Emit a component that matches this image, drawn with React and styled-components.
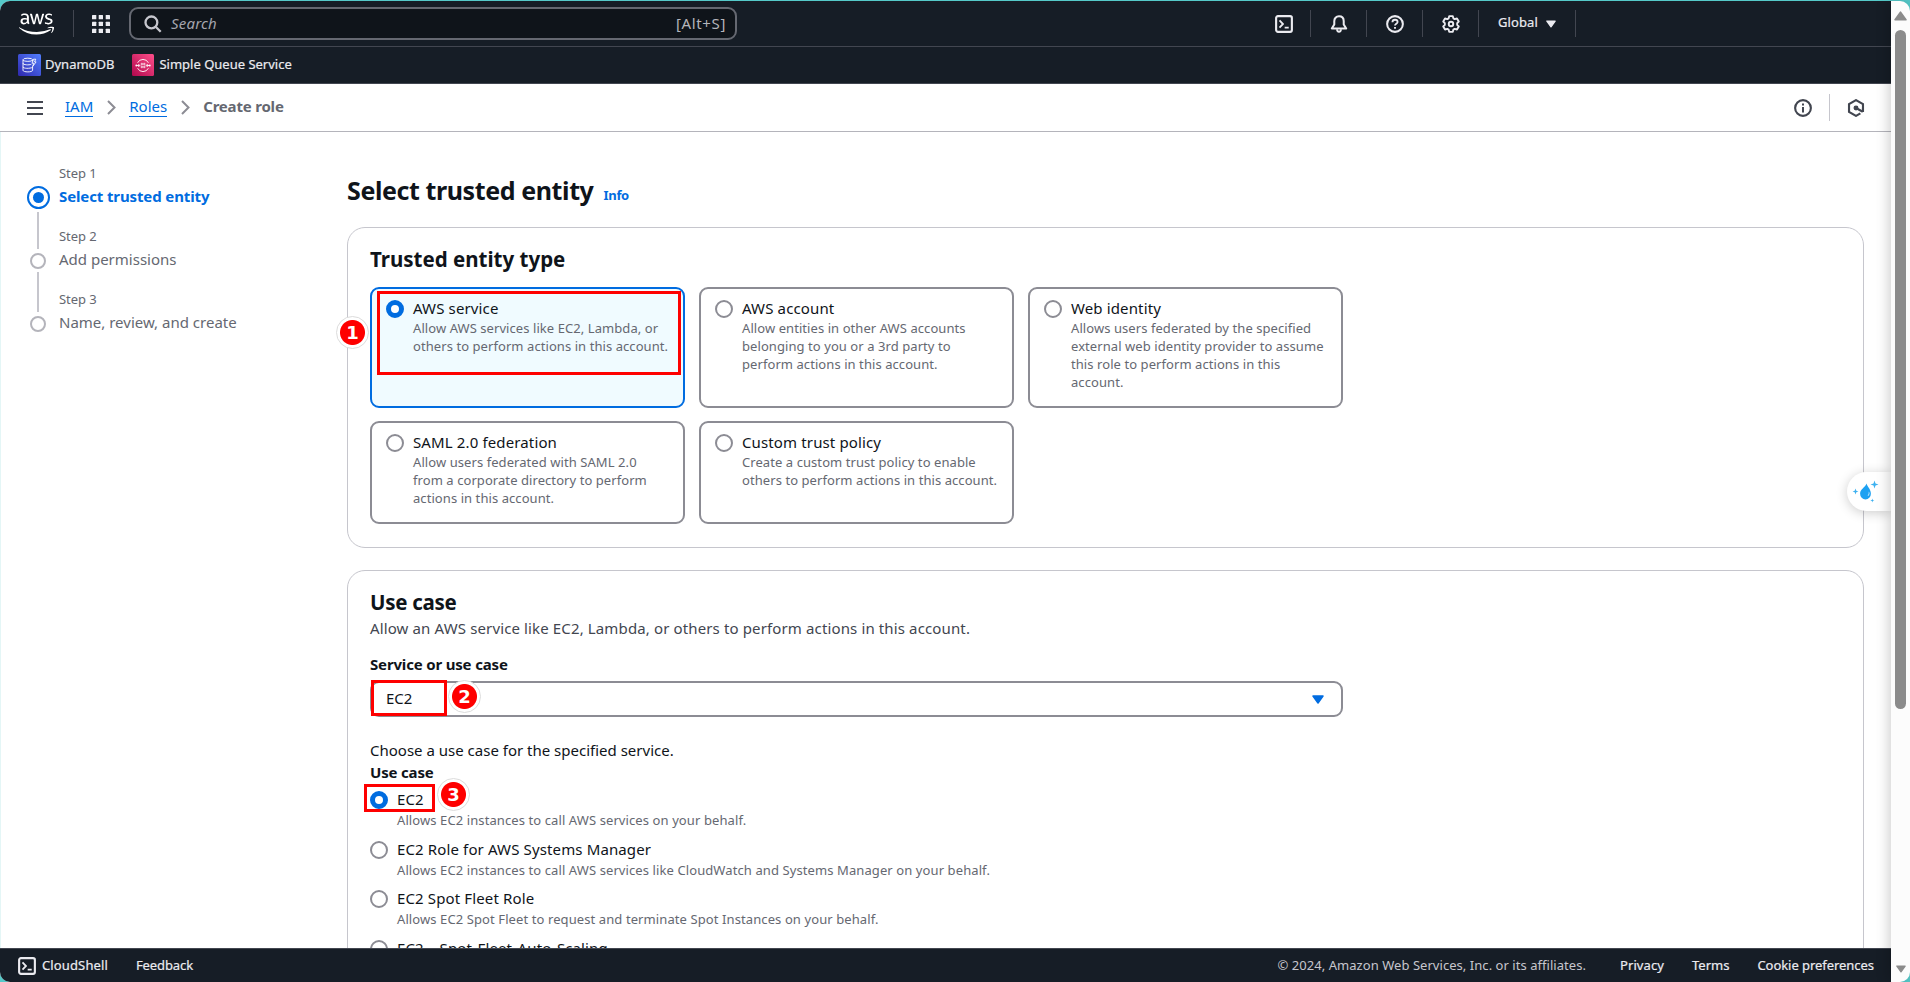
import React from 'react';
import styled, { createGlobalStyle, css } from 'styled-components';
import { FaAws } from 'react-icons/fa';

const GlobalStyle = createGlobalStyle`
  *, *::before, *::after { box-sizing: border-box; }
  body {
    margin: 0;
    overflow: hidden;
    background: #55c9c9;
    font-family: "Noto Sans", "Open Sans", sans-serif;
    font-size: 15px;
    line-height: 22px;
    color: #0f141a;
  }
  svg { display: block; flex: none; }
`;

/* ---------- window ---------- */

const Window = styled.div`
  height: 100vh;
  padding-top: 1px;
  display: flex;
`;

const Page = styled.div`
  width: 1891px;
  height: 100%;
  display: flex;
  flex-direction: column;
  background: #fff;
  border-radius: 10px 0 0 10px;
  overflow: hidden;
`;

const ScrollTrack = styled.div`
  flex: 1;
  position: relative;
  z-index: 2;
  display: flex;
  flex-direction: column;
  align-items: center;
  padding: 10px 0 8px;
  background: #fcfcfc;
  border-radius: 0 10px 10px 0;
  box-shadow: -2px 0 14px rgba(0, 0, 0, 0.2);
`;

const ScrollThumb = styled.div`
  width: 11px;
  height: 679px;
  margin: 9px 0 auto;
  border-radius: 6px;
  background: #8b8b8b;
`;

/* ---------- header ---------- */

const Header = styled.header`
  flex: none;
  height: 83px;
  background: #161d26;
  color: #ebebf0;
`;

const TopNav = styled.div`
  height: 46px;
  display: flex;
  align-items: center;
  padding-left: 19px;
  border-bottom: 1px solid #424650;
`;

const Divider = styled.span`
  flex: none;
  width: 1px;
  height: 27px;
  background: ${(p) => p.$color || '#424650'};
`;

const AwsLogo = styled(FaAws)`
  width: 35px;
  height: 28px;
  margin-right: 19px;
  color: #fff;
`;

const AppsButton = styled.span`
  display: flex;
  margin: 1px 19px 0 18px;
`;

const SearchBox = styled.div`
  width: 608px;
  height: 33px;
  display: flex;
  align-items: center;
  padding: 0 9px 0 13px;
  border: 2px solid #656871;
  border-radius: 9px;
  background: #0f141a;
  color: #a4a4ad;
`;

const SearchHint = styled.span`
  flex: 1;
  margin: -2px 0 0 9px;
  font-style: italic;
  letter-spacing: 0.2px;
`;

const Shortcut = styled.span`
  margin-top: -2px;
  letter-spacing: 0.63px;
  color: #b4b4bb;
`;

const NavTools = styled.div`
  display: flex;
  align-items: center;
  margin-left: auto;
  margin-right: 315px;
`;

const ToolButton = styled.span`
  width: 55px;
  display: flex;
  justify-content: center;
  padding-left: ${(p) => (p.$first ? 2 : 0)}px;
`;

const RegionMenu = styled.span`
  width: 96px;
  display: flex;
  align-items: center;
  padding-left: 19px;
  gap: 8px;
  font-size: 13px;
  line-height: 18px;
  letter-spacing: 0.1px;
  -webkit-text-stroke: 0.2px;
`;

const RegionName = styled.span`
  margin-top: -3px;
`;

const Favorites = styled.div`
  height: 37px;
  display: flex;
  align-items: center;
  gap: 18px;
  padding-left: 18px;
  border-bottom: 1px solid #424650;
`;

const Favorite = styled.span`
  display: flex;
  align-items: center;
  gap: ${(p) => p.$gap}px;
`;

const FavoriteName = styled.span`
  margin-top: -2px;
  font-size: 13px;
  line-height: 18px;
  -webkit-text-stroke: 0.2px;
`;

const BreadcrumbBar = styled.nav`
  flex: none;
  height: 48px;
  display: flex;
  align-items: center;
  padding: 0 26px 0 27px;
  border-bottom: 1px solid #b4b4bb;
  color: #424650;
`;

const Crumb = styled.a`
  color: #006ce0;
  line-height: 16px;
  padding-bottom: 2px;
  border-bottom: 1px solid #006ce0;
`;

const CrumbList = styled.div`
  flex: 1;
  display: flex;
  align-items: center;
  gap: 13.5px;
  margin-left: 22px;
`;

const CurrentCrumb = styled.span`
  margin-top: -3px;
  font-weight: 700;
  letter-spacing: -0.19px;
  color: #656871;
`;

const BarTools = styled.div`
  display: flex;
  align-items: center;
  gap: 17px;
`;

/* ---------- body ---------- */

const Body = styled.div`
  flex: 1;
  min-height: 0;
  overflow: hidden;
  display: flex;
  border-left: 1px solid #e4f6f6;
`;

const Steps = styled.ol`
  flex: none;
  width: 346px;
  margin: 0;
  padding: 32px 0 0 26px;
  list-style: none;
`;

const Step = styled.li`
  height: 63px;
  display: grid;
  grid-template-columns: 23px 1fr;
  column-gap: 9px;
`;

const StepRail = styled.div`
  display: grid;
  grid-template-rows: 22px 24px 1fr;
  justify-items: center;
`;

const RailLine = styled.span`
  width: 2px;
  margin: ${(p) => p.$top || 0}px 1px 0 0;
  background: ${(p) => (p.$hidden ? 'transparent' : '#c6c6cd')};
`;

const StepMarker = styled.span`
  place-self: center;
  display: grid;
  place-items: center;
  ${(p) =>
    p.$active
      ? css`
          width: 23px;
          height: 23px;
          margin-bottom: 1px;
          border: 2px solid #006ce0;
          border-radius: 50%;
          &::after {
            content: '';
            width: 11px;
            height: 11px;
            border-radius: 50%;
            background: #006ce0;
          }
        `
      : css`
          width: 16px;
          height: 16px;
          margin: 0 1px 1px 0;
          border: 2px solid #b4b4bb;
          border-radius: 50%;
        `}
`;

const StepNumber = styled.div`
  margin-bottom: 3px;
  font-size: 13px;
  line-height: 18px;
  letter-spacing: -0.08px;
  color: #656871;
`;

const StepName = styled.div`
  color: ${(p) => (p.$active ? '#006ce0' : '#656871')};
  font-weight: ${(p) => (p.$active ? 700 : 400)};
  letter-spacing: ${(p) => (p.$active ? -0.12 : 0)}px;
`;

const Main = styled.main`
  width: 1517px;
  padding-top: 43px;
`;

const TitleRow = styled.div`
  display: flex;
  align-items: baseline;
  gap: 10px;
  height: 30px;
  margin-bottom: 22px;
`;

const Title = styled.h1`
  margin: 0;
  font-size: 25px;
  line-height: 30px;
  letter-spacing: -0.4px;
`;

const InfoLink = styled.a`
  font-size: 13px;
  font-weight: 700;
  letter-spacing: -0.29px;
  color: #006ce0;
`;

const Card = styled.section`
  margin-bottom: 22px;
  padding: 18px 22px 23px;
  border: 1px solid #c6c6cd;
  border-radius: 18px;
`;

const CardTitle = styled.h2`
  margin: 0;
  font-size: 20.5px;
  line-height: 26px;
  letter-spacing: ${(p) => p.$spacing || 0}px;
`;

const Tiles = styled.div`
  display: grid;
  grid-template-columns: repeat(3, 315px);
  grid-template-rows: 121px 103px;
  gap: 13px 14px;
  margin-top: 15px;
`;

const Tile = styled.div`
  position: relative;
  display: grid;
  grid-template-columns: 18px 1fr;
  align-content: start;
  column-gap: 9px;
  padding: 8px 10px 0 14px;
  border: 2px solid ${(p) => (p.$selected ? '#006ce0' : '#8c8c94')};
  border-radius: 9px;
  background: ${(p) => (p.$selected ? '#f0fbff' : '#fff')};
`;

const Radio = styled.span`
  width: 18px;
  height: 18px;
  margin-top: 3px;
  border-radius: 50%;
  background: #fff;
  border: ${(p) => (p.$checked ? '5.5px solid #006ce0' : '2px solid #8c8c94')};
`;

const OptionLabel = styled.div`
  letter-spacing: 0.13px;
  word-spacing: ${(p) => p.$words || 0}px;
`;

const Hint = styled.div`
  grid-column: 2;
  margin-top: ${(p) => p.$top || 0}px;
  font-size: 13px;
  line-height: 18px;
  letter-spacing: ${(p) => p.$spacing || 0.07}px;
  white-space: pre-line;
  color: #656871;
`;

const CardDescription = styled.p`
  margin: 2px 0 14px;
  letter-spacing: 0.131px;
  color: #424650;
`;

const FieldLabel = styled.div`
  font-weight: 700;
  letter-spacing: -0.17px;
`;

const Select = styled.div`
  position: relative;
  width: 973px;
  height: 36px;
  margin: 6px 0 22px;
  padding: 0 17px 0 14px;
  display: flex;
  align-items: center;
  justify-content: space-between;
  border: 2px solid #8c8c94;
  border-radius: 9px;
`;

const SelectValue = styled.span`
  margin-top: -2px;
`;

const OptionRow = styled.div`
  position: relative;
  height: 49.5px;
  display: grid;
  grid-template-columns: 18px 1fr;
  align-content: start;
  column-gap: 9px;
`;

const Options = styled.div`
  padding-top: 5px;
`;

/* ---------- annotations over the content ---------- */

const Highlight = styled.span`
  position: absolute;
  left: ${(p) => p.$x}px;
  top: ${(p) => p.$y}px;
  width: ${(p) => p.$w}px;
  height: ${(p) => p.$h}px;
  border: 3px solid #fe0000;
`;

const Badge = styled.span`
  position: absolute;
  left: ${(p) => p.$x}px;
  top: ${(p) => p.$y}px;
  width: 33px;
  height: 33px;
  display: grid;
  place-items: center;
  border: 1px solid #dcdcdc;
  border-radius: 50%;
  background: radial-gradient(circle, #fe0000 12px, #fff 13px);
  color: #fff;
  font: 700 18px/31px "DejaVu Sans", sans-serif;
`;

const AssistantTab = styled.div`
  position: absolute;
  left: 1847px;
  top: 472px;
  width: 44px;
  height: 39px;
  padding: 7px 0 0 5px;
  border-radius: 20px 0 0 20px;
  background: #fff;
  box-shadow: 0 2px 12px rgba(0, 0, 0, 0.2);
`;

/* ---------- footer ---------- */

const Footer = styled.footer`
  flex: none;
  height: 34px;
  display: flex;
  align-items: center;
  padding: 0 17px 0 18px;
  border-top: 1px solid #424650;
  background: #161d26;
  color: #ebebf0;
  font-size: 13px;
  line-height: 18px;
`;

const FooterLink = styled.span`
  margin: -2px 0 0 ${(p) => p.$left}px;
  letter-spacing: ${(p) => p.$spacing || 0}px;
  -webkit-text-stroke: 0.2px;
`;

const Copyright = styled.span`
  margin: -2px 0 0 auto;
  letter-spacing: 0.046px;
  color: #c6c6cd;
`;

/* ---------- icons ---------- */

const Icon = ({ size = 18, children }) => (
  <svg width={size} height={size} viewBox="0 0 16 16" fill="none" stroke="currentColor" strokeWidth="1.9">
    {children}
  </svg>
);

const TerminalIcon = () => (
  <Icon>
    <rect x="1" y="1" width="14" height="14" rx="1.6" />
    <path d="M4 4.8 7.1 8 4 11.2M8.6 11.3h3.6" strokeWidth="1.6" />
  </Icon>
);

const BellIcon = () => (
  <Icon>
    <path d="M8 1.2c-2.6 0-4.2 1.8-4.2 4.3v2.9L1.6 12h12.8l-2.2-3.6V5.5C12.2 3 10.6 1.2 8 1.2Z" strokeLinejoin="round" strokeWidth="1.8" />
    <path d="M6.3 12.6c0 3 3.4 3 3.4 0" strokeWidth="1.7" />
  </Icon>
);

const HelpIcon = () => (
  <Icon>
    <circle cx="8" cy="8" r="7" strokeWidth="1.8" />
    <path d="M5.7 6.4c0-1.4 1-2.2 2.3-2.2s2.3.8 2.3 2c0 1.6-2.3 1.6-2.3 3.2" strokeWidth="1.6" />
    <path d="M8 10.6v1.7" strokeWidth="1.7" />
  </Icon>
);

const GearIcon = () => (
  <Icon>
    <path
      d="M6.4 1h3.2l.5 2 1.2.7 2-.6 1.6 2.7-1.400 1.400v1.600l1.400 1.400-1.600 2.700-2-.6-1.200.7-.5 2H6.400l-.5-2-1.200-.7-2 .6-1.600-2.700 1.400-1.400V7.200L1.100 5.800l1.600-2.700 2 .6L5.900 3Z"
      strokeLinejoin="round"
      strokeWidth="1.7"
    />
    <circle cx="8" cy="8" r="2" strokeWidth="1.7" />
  </Icon>
);

const InfoIcon = () => (
  <Icon>
    <circle cx="8" cy="8" r="7" strokeWidth="1.9" />
    <path d="M8 4v1.8M8 7v5" strokeWidth="1.8" />
  </Icon>
);

const HexIcon = () => (
  <Icon>
    <path d="M14.2 9.500V4.500L8 1 1.800 4.500v7L8 15l3.900-2.200" strokeWidth="1.9" />
    <path d="M14.200 8.500v3" strokeWidth="1.9" />
    <circle cx="8" cy="8" r="2.200" fill="currentColor" stroke="none" />
    <path d="m8 8 6 3.300" strokeWidth="1.900" />
  </Icon>
);

const GridIcon = () => (
  <svg width="18" height="18" viewBox="0 0 18 18" fill="currentColor">
    {[0, 7, 14].map((y) =>
      [0, 7, 14].map((x) => <rect key={`${x}-${y}`} x={x - (x ? 0.3 : 0)} y={y - (y ? 0.3 : 0)} width="4.3" height="4.3" rx="0.5" />)
    )}
  </svg>
);

const SearchIcon = () => (
  <svg width="18" height="18" viewBox="0 0 18 18" fill="none" stroke="#c6c6cd" strokeWidth="2.3">
    <circle cx="7.4" cy="7.4" r="5.9" />
    <path d="m11.7 11.7 5 5" />
  </svg>
);

const MenuIcon = () => (
  <svg width="16" height="14" viewBox="0 0 16 14" stroke="currentColor" strokeWidth="2">
    <path d="M0 1h16M0 7h16M0 13h16" />
  </svg>
);

const Chevron = () => (
  <svg width="9" height="15" viewBox="0 0 9 15" fill="none" stroke="#8c8c94" strokeWidth="2">
    <path d="m1 1 6.5 6.500L1 14" />
  </svg>
);

const Triangle = ({ w, h, color = 'currentColor', up }) => (
  <svg width={w} height={h} viewBox="0 0 12 9">
    <path d={up ? 'M1 8 6 1l5 7Z' : 'M1 1h10L6 8Z'} fill={color} stroke={color} strokeWidth="1.5" strokeLinejoin="round" />
  </svg>
);

const DynamoIcon = () => (
  <svg width="23" height="22" viewBox="0 0 23 22">
    <defs>
      <linearGradient id="dynamo" x1="0" y1="1" x2="1" y2="0">
        <stop offset="0" stopColor="#2e27ad" />
        <stop offset="1" stopColor="#527fff" />
      </linearGradient>
    </defs>
    <rect width="23" height="22" rx="1.5" fill="url(#dynamo)" />
    <g fill="none" stroke="#fff" strokeWidth="0.9">
      <ellipse cx="9.8" cy="5.8" rx="4.8" ry="1.6" />
      <path d="M5 5.800v10.500c0 2.100 9.600 2.100 9.600 0v-3.600M14.600 5.800v1.300M5 9.200c0 1.900 6 2 8.300 1.100M5 12.800c0 1.900 7 2 9.600.5" />
      <path d="m15.500 5.200-1.500 4h1.800l-1.200 3.400 3.500-4.700h-1.600l1.300-2.700Z" />
    </g>
  </svg>
);

const QueueIcon = () => (
  <svg width="22" height="22" viewBox="0 0 22 22">
    <defs>
      <linearGradient id="queue" x1="0" y1="1" x2="1" y2="0">
        <stop offset="0" stopColor="#b0084d" />
        <stop offset="1" stopColor="#ff4f8b" />
      </linearGradient>
    </defs>
    <rect width="22" height="22" rx="1.5" fill="url(#queue)" />
    <g fill="none" stroke="#fff" strokeWidth="0.9">
      <path d="M5.600 8.800a6 6 0 0 1 10.800 0M5.600 14.200a6 6 0 0 0 10.800 0" />
      <path d="M4.500 11.500h3M14.500 11.500h3M6.300 10l1.500 1.500L6.300 13M15.700 10l-1.500 1.500 1.500 1.500" />
      <path d="M9.200 9.300h1.200v1.500H9.200ZM11.700 9.300h1.200v1.500h-1.200ZM9.200 12.200h1.200v1.500H9.200ZM11.700 12.200h1.200v1.500h-1.200Z" strokeWidth="0.7" />
    </g>
    <circle cx="4.300" cy="11.500" r="0.900" fill="#fff" />
    <circle cx="17.800" cy="11.500" r="0.900" fill="#fff" />
  </svg>
);

const DropletIcon = () => (
  <svg width="28" height="26" viewBox="0 0 28 26" fill="#1da1f2">
    <path d="M14.500 4.500c.8 3.300 4.400 5.600 4.400 10.200a5.400 5.800 0 0 1-10.800 0c0-4.600 5-6 6.400-10.200Z" />
    <path d="M22.500 1.600l1 3 3 1-3 1-1 3-1-3-3-1 3-1ZM3.500 9.600l.8 2.100 2.100.8-2.100.8-.8 2.100-.8-2.100-2.100-.8 2.100-.8ZM20.300 19.600l.5 1.500 1.500.5-1.500.5-.5 1.500-.5-1.500-1.500-.5 1.500-.5Z" fill="#3db1f0" />
    <path d="M16.700 12.400c1.500 1.600.6 4.400-1.200 4.500 1.200-1.300 1.500-2.700 1.200-4.500Z" fill="#fff" />
  </svg>
);

/* ---------- data ---------- */

const steps = ['Select trusted entity', 'Add permissions', 'Name, review, and create'];

const entities = [
  { name: 'AWS service', hint: 'Allow AWS services like EC2, Lambda, or\nothers to perform actions in this account.' },
  { name: 'AWS account', hint: 'Allow entities in other AWS accounts\nbelonging to you or a 3rd party to\nperform actions in this account.' },
  { name: 'Web identity', hint: 'Allows users federated by the specified\nexternal web identity provider to assume\nthis role to perform actions in this\naccount.' },
  { name: 'SAML 2.0 federation', hint: 'Allow users federated with SAML 2.0\nfrom a corporate directory to perform\nactions in this account.' },
  { name: 'Custom trust policy', hint: 'Create a custom trust policy to enable\nothers to perform actions in this account.' },
];

const useCases = [
  { name: 'EC2', hint: 'Allows EC2 instances to call AWS services on your behalf.' },
  { name: 'EC2 Role for AWS Systems Manager', hint: 'Allows EC2 instances to call AWS services like CloudWatch and Systems Manager on your behalf.' },
  { name: 'EC2 Spot Fleet Role', hint: 'Allows EC2 Spot Fleet to request and terminate Spot Instances on your behalf.' },
  { name: 'EC2 - Spot Fleet Auto Scaling', words: 1.4 },
];

export default function App() {
  return (
    <Window>
      <GlobalStyle />
      <Page>
        <Header>
          <TopNav>
            <AwsLogo />
            <Divider />
            <AppsButton><GridIcon /></AppsButton>
            <SearchBox>
              <SearchIcon />
              <SearchHint>Search</SearchHint>
              <Shortcut>[Alt+S]</Shortcut>
            </SearchBox>
            <NavTools>
              {[TerminalIcon, BellIcon, HelpIcon, GearIcon].map((Glyph, i) => (
                <React.Fragment key={i}>
                  <ToolButton $first={i === 0}><Glyph /></ToolButton>
                  <Divider />
                </React.Fragment>
              ))}
              <RegionMenu>
                <RegionName>Global</RegionName>
                <Triangle w={10} h={8} />
              </RegionMenu>
              <Divider />
            </NavTools>
          </TopNav>
          <Favorites>
            <Favorite $gap={4}><DynamoIcon /><FavoriteName>DynamoDB</FavoriteName></Favorite>
            <Favorite $gap={5}><QueueIcon /><FavoriteName>Simple Queue Service</FavoriteName></Favorite>
          </Favorites>
        </Header>

        <BreadcrumbBar>
          <MenuIcon />
          <CrumbList>
            <Crumb>IAM</Crumb>
            <Chevron />
            <Crumb>Roles</Crumb>
            <Chevron />
            <CurrentCrumb>Create role</CurrentCrumb>
          </CrumbList>
          <BarTools>
            <InfoIcon />
            <Divider $color="#c6c6cd" />
            <HexIcon />
          </BarTools>
        </BreadcrumbBar>

        <Body>
          <Steps>
            {steps.map((name, i) => (
              <Step key={name}>
                <StepRail>
                  <RailLine $hidden={i === 0} />
                  <StepMarker $active={i === 0} />
                  <RailLine $hidden={i === steps.length - 1} $top={i === 0 ? 2 : -1} />
                </StepRail>
                <div>
                  <StepNumber>Step {i + 1}</StepNumber>
                  <StepName $active={i === 0}>{name}</StepName>
                </div>
              </Step>
            ))}
          </Steps>

          <Main>
            <TitleRow>
              <Title>Select trusted entity</Title>
              <InfoLink>Info</InfoLink>
            </TitleRow>

            <Card>
              <CardTitle>Trusted entity type</CardTitle>
              <Tiles>
                {entities.map((entity, i) => (
                  <Tile key={entity.name} $selected={i === 0}>
                    <Radio $checked={i === 0} />
                    <OptionLabel>{entity.name}</OptionLabel>
                    <Hint>{entity.hint}</Hint>
                    {i === 0 && (
                      <>
                        <Highlight $x={5} $y={2} $w={304} $h={84} />
                        <Badge $x={-36} $y={27}>1</Badge>
                      </>
                    )}
                  </Tile>
                ))}
              </Tiles>
            </Card>

            <Card>
              <CardTitle $spacing={-0.3}>Use case</CardTitle>
              <CardDescription>
                Allow an AWS service like EC2, Lambda, or others to perform actions in this account.
              </CardDescription>
              <FieldLabel>Service or use case</FieldLabel>
              <Select>
                <SelectValue>EC2</SelectValue>
                <Triangle w={12} h={9} color="#006ce0" />
                <Highlight $x={-1} $y={-3} $w={76} $h={36} />
                <Badge $x={76} $y={-3}>2</Badge>
              </Select>
              <div>Choose a use case for the specified service.</div>
              <FieldLabel>Use case</FieldLabel>
              <Options>
                {useCases.map((useCase, i) => (
                  <OptionRow key={useCase.name}>
                    <Radio $checked={i === 0} />
                    <OptionLabel $words={useCase.words}>{useCase.name}</OptionLabel>
                    {useCase.hint && <Hint $top={1} $spacing={0.096}>{useCase.hint}</Hint>}
                    {i === 0 && (
                      <>
                        <Highlight $x={-6} $y={-4} $w={71} $h={28} />
                        <Badge $x={67} $y={-10}>3</Badge>
                      </>
                    )}
                  </OptionRow>
                ))}
              </Options>
            </Card>
          </Main>
        </Body>

        <Footer>
          <TerminalIcon />
          <FooterLink $left={6} $spacing={0.13}>CloudShell</FooterLink>
          <FooterLink $left={28} $spacing={-0.11}>Feedback</FooterLink>
          <Copyright>© 2024, Amazon Web Services, Inc. or its affiliates.</Copyright>
          <FooterLink $left={34} $spacing={0.09}>Privacy</FooterLink>
          <FooterLink $left={28}>Terms</FooterLink>
          <FooterLink $left={28} $spacing={-0.05}>Cookie preferences</FooterLink>
        </Footer>
      </Page>
      <AssistantTab><DropletIcon /></AssistantTab>
      <ScrollTrack>
        <Triangle w={13} h={10} color="#8b8b8b" up />
        <ScrollThumb />
        <Triangle w={10} h={10} color="#8b8b8b" />
      </ScrollTrack>
    </Window>
  );
}
